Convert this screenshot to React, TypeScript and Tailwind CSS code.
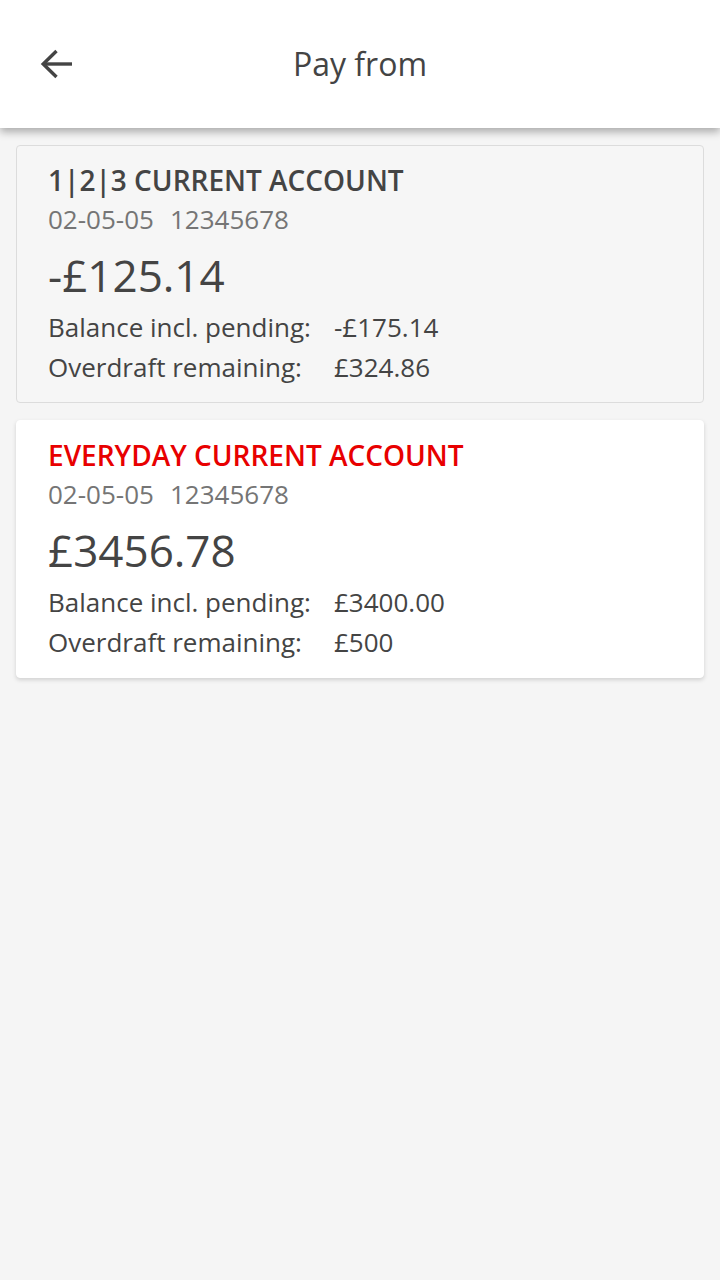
type Account = {
  name: string;
  sortCode: string;
  number: string;
  balance: string;
  pending: string;
  overdraft: string;
  selected?: boolean;
};

const accounts: Account[] = [
  {
    name: '1|2|3 CURRENT ACCOUNT',
    sortCode: '02-05-05',
    number: '12345678',
    balance: '-£125.14',
    pending: '-£175.14',
    overdraft: '£324.86',
  },
  {
    name: 'EVERYDAY CURRENT ACCOUNT',
    sortCode: '02-05-05',
    number: '12345678',
    balance: '£3456.78',
    pending: '£3400.00',
    overdraft: '£500',
    selected: true,
  },
];

function BackArrow() {
  return (
    <svg width="32" height="32" viewBox="0 0 32 32" fill="none" stroke="currentColor" strokeWidth="3.4">
      <path d="M32 16H3" />
      <path d="M16.5 3L3.2 16l13.3 13" strokeLinejoin="miter" />
    </svg>
  );
}

function AccountCard({ account }: { account: Account }) {
  return (
    <div
      className={`rounded-[4px] border px-[31px] pt-[15px] pb-[15px] ${
        account.selected
          ? 'border-white bg-white shadow-[0_2px_4px_rgba(0,0,0,0.15)]'
          : 'border-[#dcdcdc] bg-[#f6f6f6]'
      }`}
    >
      <div
        className={`text-[28px] font-semibold leading-[38px] ${
          account.selected ? 'text-[#e80000]' : 'text-[#444444]'
        }`}
      >
        {account.name}
      </div>
      <div className="text-[26px] leading-[40px] text-[#757575]">
        {account.sortCode}
        <span className="ml-[16px]">{account.number}</span>
      </div>
      <div className="mt-[4px] text-[44px] leading-[64px] text-[#444444]">{account.balance}</div>
      <div className="grid grid-cols-[286px_1fr] text-[26px] leading-[40px] text-[#444444]">
        <span>Balance incl. pending:</span>
        <span>{account.pending}</span>
        <span>Overdraft remaining:</span>
        <span>{account.overdraft}</span>
      </div>
    </div>
  );
}

export default function App() {
  return (
    <div className="min-h-[1280px] bg-[#f5f5f5] font-['Open_Sans',sans-serif]">
      <header className="relative z-10 flex h-[128px] items-center bg-white shadow-[0_4px_8px_rgba(0,0,0,0.3)]">
        <button className="ml-[40px] flex h-[32px] w-[32px] items-center justify-center text-[#444444]">
          <BackArrow />
        </button>
        <h1 className="pointer-events-none absolute left-0 right-0 text-center text-[32px] leading-none text-[#444444]">
          Pay from
        </h1>
      </header>

      <main className="flex flex-col gap-[17px] px-[16px] pt-[17px]">
        {accounts.map((a) => (
          <AccountCard key={a.name} account={a} />
        ))}
      </main>
    </div>
  );
}
